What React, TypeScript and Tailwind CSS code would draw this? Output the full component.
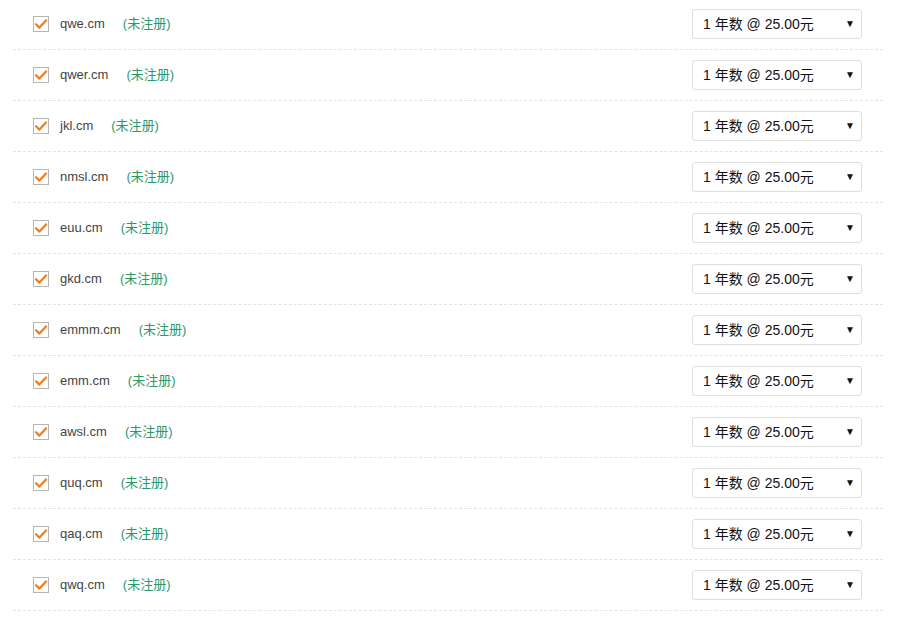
const domains = [
  "qwe.cm",
  "qwer.cm",
  "jkl.cm",
  "nmsl.cm",
  "euu.cm",
  "gkd.cm",
  "emmm.cm",
  "emm.cm",
  "awsl.cm",
  "quq.cm",
  "qaq.cm",
  "qwq.cm",
];

function CheckBox() {
  return (
    <span className="w-4 h-4 border border-[#b5b5b5] bg-white flex items-center justify-center shrink-0">
      <svg width="14" height="14" viewBox="0 0 14 14">
        <path d="M2 7.2 L5.4 10.6 L12 3.4" fill="none" stroke="#f07d1a" strokeWidth="2.2" strokeLinecap="round" strokeLinejoin="round" />
      </svg>
    </span>
  );
}

export default function App() {
  return (
    <div
      className="w-[901px] h-[628px] bg-white overflow-hidden"
      style={{ fontFamily: '"Liberation Sans", "Noto Sans CJK SC", sans-serif' }}
    >
      <div className="ml-[13px] w-[870px] -mt-px">
        {domains.map((d) => (
          <div
            key={d}
            className="h-[51px] flex items-center pl-5 pr-[21px] border-b border-dashed border-[#e3e3e3]"
          >
            <CheckBox />
            <span className="ml-[11px] text-[13px] text-[#444]">{d}</span>
            <span className="ml-[18px] text-[13px] text-[#2a9868]">(未注册)</span>
            <div className="ml-auto w-[170px] h-[30px] border border-[#dedede] rounded-[3px] flex items-center pl-[10px] pr-[6px] text-[14px] text-[#111]">
              <span>1 年数 @ 25.00元</span>
              <span className="ml-auto text-[10px] leading-none">▼</span>
            </div>
          </div>
        ))}
      </div>
    </div>
  );
}
